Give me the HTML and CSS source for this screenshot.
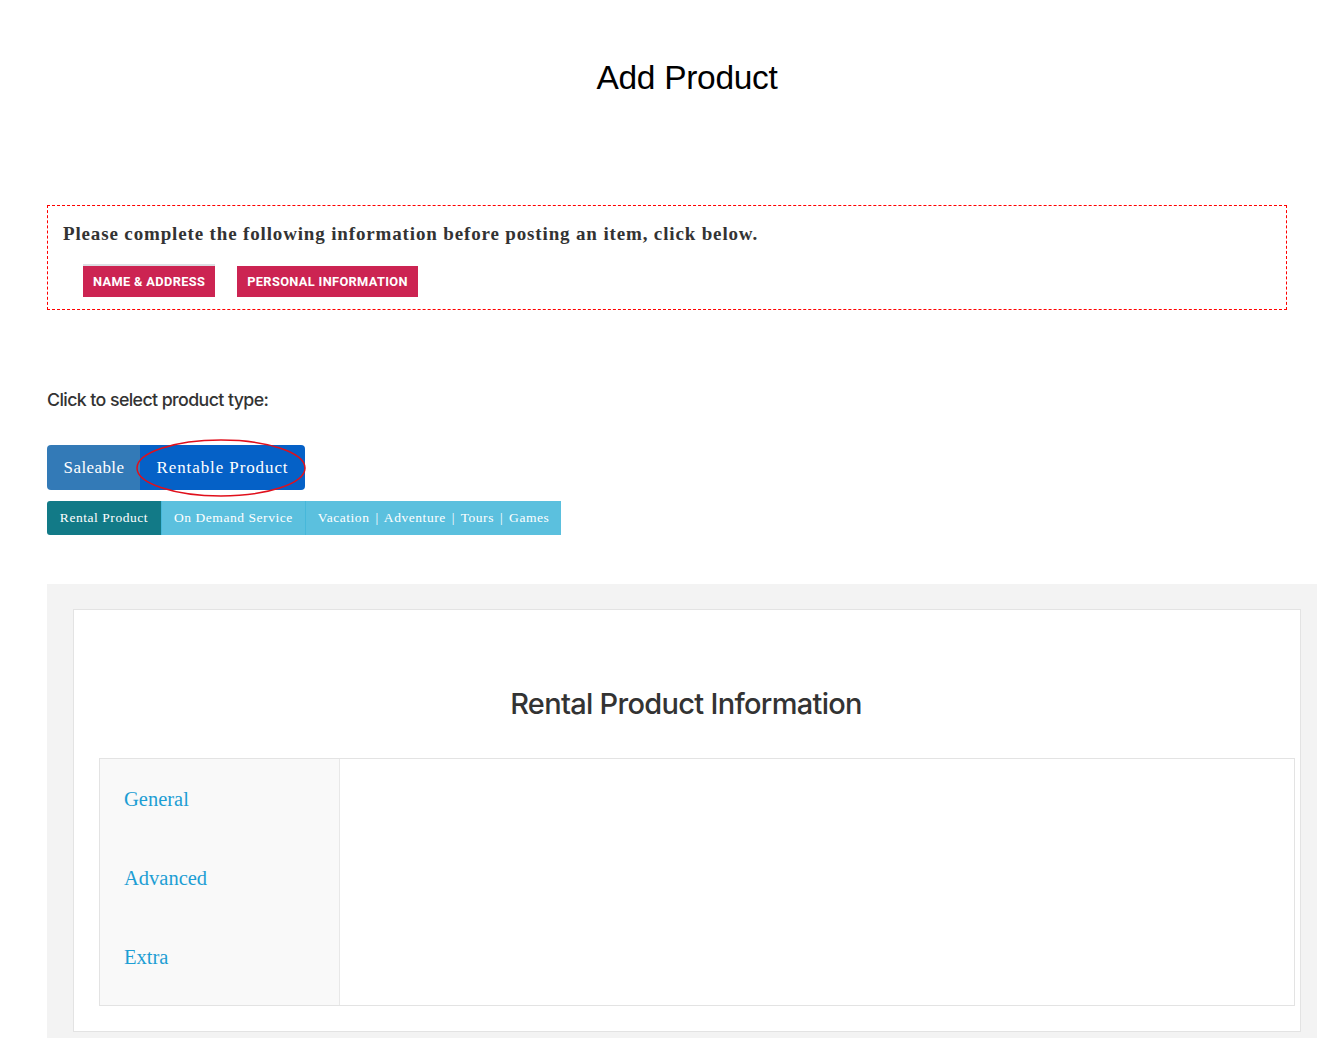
FILE: index.html
```html
<!DOCTYPE html>
<html>
<head>
<meta charset="utf-8">
<title>Add Product</title>
<link rel="stylesheet" href="styles.css">
</head>
<body>
<div class="page">
  <h1 class="page-title">Add Product</h1>

  <div class="notice">
    <p class="notice-text">Please complete the following information before posting an item, click below.</p>
    <div class="notice-actions">
      <a class="btn-red btn-red-first">NAME &amp; ADDRESS</a>
      <a class="btn-red">PERSONAL INFORMATION</a>
    </div>
  </div>

  <p class="select-label">Click to select product type:</p>

  <div class="type-group">
    <a class="type-btn type-saleable">Saleable</a>
    <a class="type-btn type-rentable">Rentable Product
      <svg class="circle-mark" width="172" height="62" viewBox="0 0 172 62"><ellipse cx="86" cy="31" rx="84" ry="28" fill="none" stroke="#e0101c" stroke-width="1.5"/></svg>
    </a>
  </div>

  <div class="sub-group">
    <a class="sub-btn sub-active">Rental Product</a>
    <a class="sub-btn">On Demand Service</a>
    <a class="sub-btn">Vacation <span class="sep">|</span> Adventure <span class="sep">|</span> Tours <span class="sep">|</span> Games</a>
  </div>

  <section class="panel">
    <div class="card">
      <h2 class="card-title">Rental Product Information</h2>
      <div class="tabs">
        <ul class="tab-list">
          <li><a>General</a></li>
          <li><a>Advanced</a></li>
          <li><a>Extra</a></li>
        </ul>
        <div class="tab-content"></div>
      </div>
    </div>
  </section>
</div>
</body>
</html>
```

FILE: styles.css
```css
html, body {
  margin: 0;
  padding: 0;
  background: #fff;
  overflow-x: hidden;
}
body {
  font-family: "Liberation Serif", serif;
  color: #333;
}
.page {
  width: 1280px;
  margin-left: 47px;
  padding-top: 58px;
}
.page-title {
  margin: 0;
  font-family: "Liberation Sans", Arial, sans-serif;
  font-weight: 400;
  font-size: 33.5px;
  line-height: 40px;
  color: #000;
  text-align: center;
  letter-spacing: -0.3px;
}
.notice {
  margin-top: 107px;
  border: 1px dashed #ff0000;
  padding: 14px 0 12px 15px;
  box-sizing: border-box;
  width: 1240px;
}
.notice-text {
  margin: 0;
  font-family: "Liberation Serif", serif;
  font-weight: 700;
  font-size: 19px;
  line-height: 27px;
  color: #333;
  letter-spacing: 0.85px;
}
.notice-actions {
  display: flex;
  gap: 22px;
  margin-top: 19px;
  padding-left: 20px;
}
.btn-red {
  display: inline-block;
  background: #cc2452;
  color: #fff;
  font-family: "Roboto", "Liberation Sans", sans-serif;
  font-weight: 700;
  font-size: 12.8px;
  line-height: 31px;
  height: 31px;
  padding: 0 10px;
  letter-spacing: 0.35px;
}
.btn-red-first {
  box-shadow: 0 -2px 0 #dcdfe3;
}
.select-label {
  margin: 78px 0 0;
  font-family: "Inter", "Liberation Sans", sans-serif;
  font-weight: 500;
  font-size: 17.8px;
  line-height: 24px;
  letter-spacing: -0.6px;
  color: #333;
}
.type-group {
  display: inline-flex;
  margin-top: 33px;
  border-radius: 4px;
}
.type-btn {
  position: relative;
  display: block;
  height: 45px;
  line-height: 45px;
  color: #fff;
  font-family: "Liberation Serif", serif;
  font-size: 17px;
  letter-spacing: 0.4px;
}
.type-saleable {
  width: 93px;
  text-align: center;
  background: #337ab7;
  border-radius: 4px 0 0 4px;
  box-sizing: border-box;
  padding-left: 1px;
}
.type-rentable {
  width: 165px;
  text-align: center;
  background: #0561c7;
  border-radius: 0 4px 4px 0;
  box-sizing: border-box;
  letter-spacing: 0.9px;
}
.circle-mark {
  position: absolute;
  left: -5px;
  top: -8px;
  pointer-events: none;
}
.sub-group {
  display: flex;
  margin-top: 11px;
  width: max-content;
}
.sub-btn {
  display: block;
  height: 34px;
  line-height: 34px;
  box-sizing: border-box;
  padding: 0 12px;
  background: #5bc0de;
  color: #fff;
  font-family: "Liberation Serif", serif;
  font-size: 13.5px;
  letter-spacing: 0.55px;
  border-left: 1px solid #46b8da;
}
.sub-btn:first-child {
  border-left: none;
  border-radius: 3px 0 0 3px;
}
.sub-active {
  background: #127a87;
  width: 114px;
  text-align: center;
  padding: 0;
}
.sep {
  margin: 0 2px;
}
.panel {
  margin-top: 49px;
  background: #f3f3f3;
  padding: 25px 26px 0;
  height: 460px;
  box-sizing: border-box;
}
.card {
  background: #fff;
  border: 1px solid #e3e3e3;
  padding: 0 5px 25px 25px;
}
.card-title {
  margin: 0;
  padding-top: 76px;
  font-family: "Inter", "Liberation Sans", sans-serif;
  font-weight: 500;
  font-size: 29px;
  line-height: 36px;
  letter-spacing: -0.7px;
  color: #333;
  text-align: center;
  padding-right: 22px;
}
.tabs {
  display: flex;
  margin-top: 36px;
  border: 1px solid #e3e3e3;
  height: 248px;
  box-sizing: border-box;
}
.tab-list {
  list-style: none;
  margin: 0;
  padding: 28px 0 0 24px;
  width: 240px;
  box-sizing: border-box;
  background: #f9f9f9;
  border-right: 1px solid #e8e8e8;
}
.tab-list li {
  height: 79px;
}
.tab-list a {
  font-family: "Liberation Serif", serif;
  font-size: 20.5px;
  color: #1d9ed4;
  line-height: 24px;
}
.tab-content {
  flex: 1;
  background: #fff;
}
```
